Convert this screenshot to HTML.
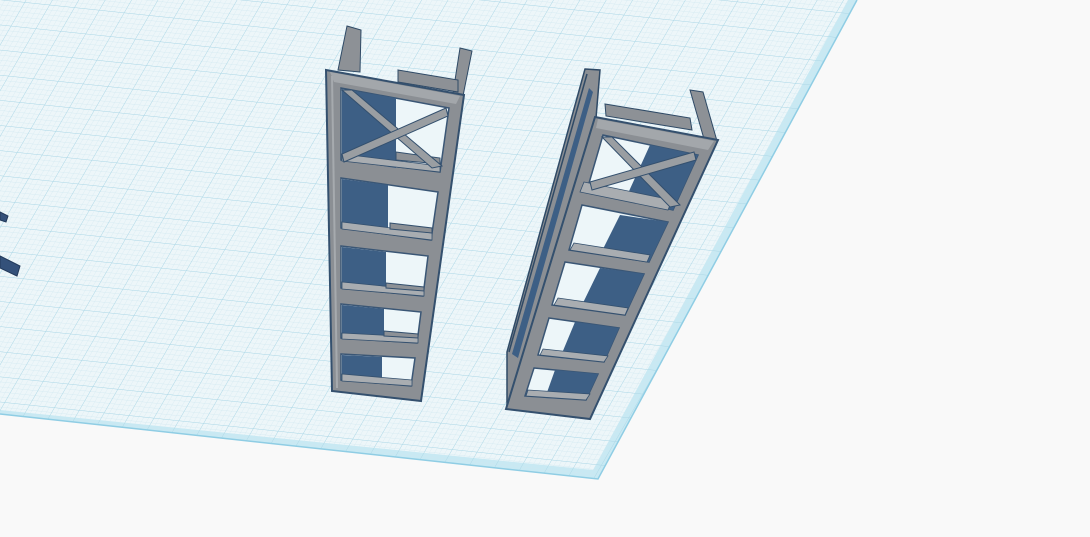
<!DOCTYPE html>
<html><head><meta charset="utf-8"><style>html,body{margin:0;padding:0;background:#f9f9f9;overflow:hidden}svg{display:block}</style></head>
<body>
<svg width="1090" height="537" viewBox="0 0 1090 537" xmlns="http://www.w3.org/2000/svg">
<defs>
<pattern id="minor" width="5" height="5" patternUnits="userSpaceOnUse" patternTransform="rotate(6) skewX(-24)">
<path d="M5 0V5M0 5H5" stroke="#cfe7f0" stroke-width="0.6" fill="none"/>
</pattern>
<pattern id="major" width="25" height="25" patternUnits="userSpaceOnUse" patternTransform="rotate(6) skewX(-24)">
<path d="M25 0V25M0 25H25" stroke="#a9d6e6" stroke-width="0.9" fill="none"/>
</pattern>
<clipPath id="plane"><polygon points="0,0 857,0 598,479 0,414"/></clipPath>
</defs>
<rect width="1090" height="537" fill="#f9f9f9"/>
<polygon points="0,0 857,0 598,479 0,414" fill="#c8e9f3"/>
<polygon points="0,0 848,0 593,470 0,410" fill="#edf6f9"/>
<g clip-path="url(#plane)">
<rect width="900" height="500" fill="url(#minor)"/>
<rect width="900" height="500" fill="url(#major)"/>
</g>
<polyline points="0,414 598,479 857,0" fill="none" stroke="#8fcde4" stroke-width="1.5"/>

<polygon points="0,212 8,216 6,222 0,220" fill="#34517a" stroke="#22395a"/>
<polygon points="0,256 20,266 17,276 0,268" fill="#34517a" stroke="#22395a"/>

<!-- LEFT TRUSS -->
<polygon points="347,26 361,30 360,72 338,70" fill="#8d9196" stroke="#2f4a66"/>
<polygon points="460,48 472,51 463,96 453,93" fill="#8d9196" stroke="#2f4a66"/>
<polygon points="398,70 458,80 458,92 398,82" fill="#8d9196" stroke="#2f4a66"/>
<polygon points="326,70 464,95 421,401 332,391" fill="#8b8f94" stroke="#34506e" stroke-width="2"/>
<polygon points="330,72 460,96 456,104 334,82" fill="#a3a7ab"/>
<g stroke="#3a5675" stroke-width="1.5">
<polygon points="341,88 449,108 440,172 341,160" fill="#edf6f9"/>
<polygon points="341,178 438,192 431,240 341,228" fill="#edf6f9"/>
<polygon points="341,246 428,256 423,296 341,288" fill="#edf6f9"/>
<polygon points="341,304 421,312 417,343 341,338" fill="#edf6f9"/>
<polygon points="341,354 415,358 411,386 341,380" fill="#edf6f9"/>
</g>
<g fill="#3d5f85">
<polygon points="342,89 396,98 396,168 342,160"/>
<polygon points="342,179 388,185 388,233 342,228"/>
<polygon points="342,247 386,252 386,292 342,288"/>
<polygon points="342,305 384,309 384,340 342,338"/>
<polygon points="342,355 382,357 382,383 342,380"/>
</g>
<g fill="#a9adb1" stroke="#34506e" stroke-width="0.8">
<polygon points="342,154 440,166 440,172 342,161"/>
<polygon points="342,222 432,233 432,240 342,229"/>
<polygon points="342,282 424,290 424,296 342,289"/>
<polygon points="342,333 418,337 418,343 342,339"/>
<polygon points="342,374 412,380 412,386 342,381"/>
</g>
<g fill="#8d9196" stroke="#34506e">
<polygon points="396,152 440,158 440,164 396,160"/>
<polygon points="390,223 432,228 432,233 390,229"/>
<polygon points="386,283 424,287 424,291 386,288"/>
<polygon points="384,331 418,334 418,338 384,336"/>
</g>
<g stroke="#34506e" stroke-width="1">
<polygon points="342,90 352,90 442,166 432,168" fill="#9a9ea2"/>
<polygon points="446,108 448,116 344,162 342,154" fill="#9a9ea2"/>
</g>
<line x1="332" y1="76" x2="337" y2="388" stroke="#a6aaae" stroke-width="2"/>

<!-- RIGHT TRUSS -->
<polygon points="585,69 600,70 596,118 507,408 507,352" fill="#8b8f94" stroke="#2f4a66" stroke-width="1.5"/>
<polygon points="589,88 593,92 518,358 512,354" fill="#3d5f85"/>
<line x1="587" y1="74" x2="509" y2="352" stroke="#2f4a66" stroke-width="1.5"/>
<polygon points="690,90 703,92 717,141 704,139" fill="#8d9196" stroke="#2f4a66"/>
<polygon points="605,104 690,118 692,130 606,116" fill="#8d9196" stroke="#2f4a66"/>
<polygon points="595,117 718,140 590,419 506,409" fill="#8b8f94" stroke="#34506e" stroke-width="2"/>
<polygon points="598,119 714,141 708,150 596,128" fill="#a3a7ab"/>
<g stroke="#3a5675" stroke-width="1.5">
<polygon points="603,135 698,155 673,210 587,190" fill="#edf6f9"/>
<polygon points="582,205 668,222 649,262 569,250" fill="#edf6f9"/>
<polygon points="565,262 644,274 625,315 552,305" fill="#edf6f9"/>
<polygon points="549,318 619,328 604,362 538,355" fill="#edf6f9"/>
<polygon points="534,368 598,374 586,400 525,396" fill="#edf6f9"/>
</g>
<g fill="#3d5f85">
<polygon points="650,145 698,155 673,210 625,200"/>
<polygon points="620,215 668,222 649,262 600,255"/>
<polygon points="600,268 644,274 625,315 580,309"/>
<polygon points="575,322 619,328 604,362 560,358"/>
<polygon points="555,370 598,374 586,400 545,398"/>
</g>
<g fill="#a9adb1" stroke="#34506e" stroke-width="0.8">
<polygon points="584,182 672,200 668,210 580,192"/>
<polygon points="574,243 650,255 647,262 570,250"/>
<polygon points="558,298 628,308 625,315 554,305"/>
<polygon points="543,349 608,356 604,362 540,355"/>
<polygon points="528,390 590,394 586,400 526,396"/>
</g>
<g stroke="#34506e" stroke-width="1">
<polygon points="602,137 612,137 680,205 670,207" fill="#9a9ea2"/>
<polygon points="694,152 696,160 592,190 590,182" fill="#9a9ea2"/>
</g>
</svg>
</body></html>
